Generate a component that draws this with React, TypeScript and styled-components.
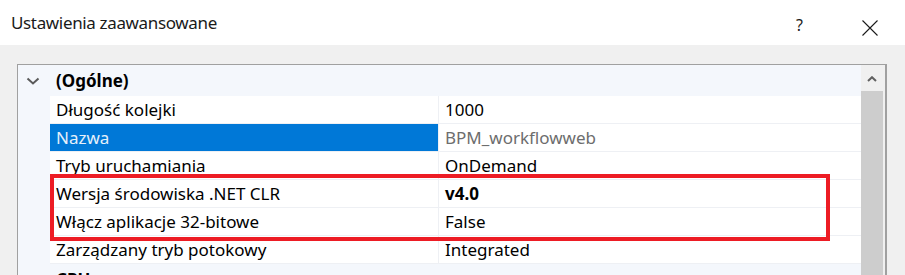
import React from 'react';
import styled, { createGlobalStyle } from 'styled-components';

const GlobalStyle = createGlobalStyle`
  html, body {
    margin: 0;
    padding: 0;
    background: #f0f0f0;
  }
  * {
    box-sizing: border-box;
  }
`;

type Prop = {
  name: string;
  value: string;
  selected?: boolean;
  readOnly?: boolean;
  bold?: boolean;
};

const props: Prop[] = [
  { name: 'Długość kolejki', value: '1000' },
  { name: 'Nazwa', value: 'BPM_workflowweb', selected: true, readOnly: true },
  { name: 'Tryb uruchamiania', value: 'OnDemand' },
  { name: 'Wersja środowiska .NET CLR', value: 'v4.0', bold: true },
  { name: 'Włącz aplikacje 32-bitowe', value: 'False' },
  { name: 'Zarządzany tryb potokowy', value: 'Integrated' },
];

export default function App() {
  return (
    <>
      <GlobalStyle />
      <Window>
        <TitleBar>
          <Title>Ustawienia zaawansowane</Title>
          <HelpButton>?</HelpButton>
          <CloseButton>
            <svg width="16" height="16" viewBox="0 0 16 16">
              <path d="M0.5 0.5 L15.5 15.5 M15.5 0.5 L0.5 15.5" stroke="#1a1a1a" strokeWidth="1.1" fill="none" />
            </svg>
          </CloseButton>
        </TitleBar>
        <Body>
          <Grid>
            <Rows>
              <GroupRow>
                <Margin>
                  <svg width="14" height="8" viewBox="0 0 14 8">
                    <polyline points="1.5,1.5 7,6.5 12.5,1.5" stroke="#5a5a5a" strokeWidth="2" fill="none" />
                  </svg>
                </Margin>
                <GroupLabel>(Ogólne)</GroupLabel>
              </GroupRow>
              {props.map((p) => (
                <Row key={p.name}>
                  <Margin />
                  <NameCell $selected={p.selected}>{p.name}</NameCell>
                  <ValueCell $readOnly={p.readOnly} $bold={p.bold}>
                    {p.value}
                  </ValueCell>
                </Row>
              ))}
              <GroupRow>
                <Margin />
                <GroupLabel>CPU</GroupLabel>
              </GroupRow>
              <Highlight />
            </Rows>
            <ScrollBar>
              <ScrollArrow>
                <svg width="10" height="6" viewBox="0 0 10 6">
                  <polyline points="1,5 5,1.2 9,5" stroke="#606060" strokeWidth="2" fill="none" />
                </svg>
              </ScrollArrow>
              <Thumb />
            </ScrollBar>
          </Grid>
        </Body>
      </Window>
    </>
  );
}

const Window = styled.div`
  width: 905px;
  height: 275px;
  overflow: hidden;
  display: flex;
  flex-direction: column;
  font-family: 'Noto Sans', 'Open Sans', sans-serif;
  color: #000;
`;

const TitleBar = styled.div`
  height: 45px;
  flex-shrink: 0;
  background: #ffffff;
  display: flex;
  align-items: flex-start;
  padding-left: 11px;
`;

const Title = styled.div`
  flex: 1;
  font-size: 17px;
  line-height: 23px;
  letter-spacing: -0.35px;
  color: #1a1a1a;
  padding-top: 11px;
`;

const HelpButton = styled.div`
  width: 16px;
  font-size: 16px;
  line-height: 22px;
  color: #1a1a1a;
  margin-right: 50px;
  padding-top: 14px;
`;

const CloseButton = styled.div`
  width: 16px;
  height: 16px;
  margin-right: 27px;
  display: flex;
  margin-top: 20px;
`;

const Body = styled.div`
  flex: 1;
  padding: 19px 18px 0 17px;
`;

const Grid = styled.div`
  height: 240px;
  border: 1px solid #a0a0a0;
  border-bottom: none;
  border-right-width: 2px;
  background: #ffffff;
  display: flex;
`;

const Rows = styled.div`
  position: relative;
  flex: 1;
  display: flex;
  flex-direction: column;
`;

const GroupRow = styled.div`
  height: 31px;
  flex-shrink: 0;
  display: flex;
  align-items: center;
  background: #f4f7fc;
`;

const Row = styled.div`
  height: 28px;
  flex-shrink: 0;
  display: flex;
  align-items: stretch;
`;

const Margin = styled.div`
  width: 32px;
  align-self: stretch;
  flex-shrink: 0;
  background: #f4f7fc;
  display: flex;
  align-items: center;
  justify-content: center;
  padding-right: 2px;
`;

const GroupLabel = styled.div`
  font-size: 17px;
  font-weight: 700;
  padding-left: 6px;
  padding-bottom: 1px;
`;

const NameCell = styled.div<{ $selected?: boolean }>`
  width: 389px;
  flex-shrink: 0;
  display: flex;
  align-items: center;
  padding-left: 6px;
  font-size: 17px;
  border-right: 1px solid #eef0f4;
  border-bottom: 1px solid #eef0f4;
  background: ${(p) => (p.$selected ? '#0078d7' : '#ffffff')};
  color: ${(p) => (p.$selected ? '#e6f0fa' : '#000')};
`;

const ValueCell = styled.div<{ $readOnly?: boolean; $bold?: boolean }>`
  flex: 1;
  display: flex;
  align-items: center;
  padding-left: 6px;
  font-size: 17px;
  border-bottom: 1px solid #eef0f4;
  font-weight: ${(p) => (p.$bold ? 700 : 400)};
  color: ${(p) => (p.$readOnly ? '#6d6d6d' : '#000')};
`;

const Highlight = styled.div`
  position: absolute;
  left: 32px;
  top: 109px;
  width: 780px;
  height: 67px;
  border: 4px solid #ed1c24;
  pointer-events: none;
`;

const ScrollBar = styled.div`
  width: 24px;
  flex-shrink: 0;
  background: #f0f0f0;
  display: flex;
  flex-direction: column;
  padding-right: 2px;
`;

const ScrollArrow = styled.div`
  height: 26px;
  display: flex;
  align-items: center;
  justify-content: center;
  padding-top: 2px;
`;

const Thumb = styled.div`
  flex: 1;
  background: #cdcdcd;
`;
